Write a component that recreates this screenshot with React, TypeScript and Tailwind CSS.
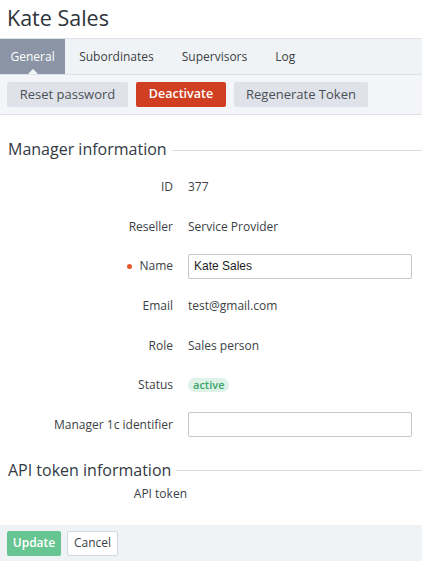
import React from 'react';

const rows: { label: string; value?: string; kind?: 'input' | 'badge'; required?: boolean }[] = [
  { label: 'ID', value: '377' },
  { label: 'Reseller', value: 'Service Provider' },
  { label: 'Name', value: 'Kate Sales', kind: 'input', required: true },
  { label: 'Email', value: 'test@gmail.com' },
  { label: 'Role', value: 'Sales person' },
  { label: 'Status', value: 'active', kind: 'badge' },
  { label: 'Manager 1c identifier', value: '', kind: 'input' },
];

function SectionTitle({ title }: { title: string }) {
  return (
    <div className="flex items-center gap-[5px] pl-2">
      <h2 className="text-[16px] leading-[24px] text-[#333a44] whitespace-nowrap">{title}</h2>
      <div className="flex-1 h-px bg-[#d9dde3] mt-[2px]" />
    </div>
  );
}

export default function App() {
  return (
    <div
      className="w-[422px] h-[564px] bg-white text-[#3b3f45] flex flex-col overflow-hidden"
      style={{ fontFamily: '"Open Sans", "Noto Sans", sans-serif' }}
    >
      <h1 className="text-[21.5px] leading-[28px] px-[7px] pt-[4px] pb-[6px] text-[#2f343b]">Kate Sales</h1>

      {/* tabs */}
      <div className="flex h-[36px] bg-[#f0f3f6] border-t border-[#dde2e8] text-[12px]">
        <div className="relative flex items-center px-[10.5px] bg-[#8b95a5] text-white">
          General
          <span className="absolute bottom-0 left-1/2 -translate-x-1/2 w-0 h-0 border-l-[5px] border-r-[5px] border-b-[5px] border-l-transparent border-r-transparent border-b-[#f3f5f8]" />
        </div>
        <div className="flex items-center px-[14px] text-[#3b3f45]">Subordinates</div>
        <div className="flex items-center px-[14px] text-[#3b3f45]">Supervisors</div>
        <div className="flex items-center px-[14px] text-[#3b3f45]">Log</div>
      </div>

      {/* actions */}
      <div className="flex gap-2 px-[7px] py-[7px] bg-[#f3f5f8] border-t border-b border-[#dde2e8] text-[13px]">
        <button className="h-[25px] w-[121px] rounded-[2px] bg-[#dfe3e9] text-[#4a4f56]">Reset password</button>
        <button className="h-[25px] w-[90px] rounded-[2px] bg-[#d03f22] text-white font-semibold text-[12.5px]">Deactivate</button>
        <button className="h-[25px] w-[134px] rounded-[2px] bg-[#dfe3e9] text-[#4a4f56]">Regenerate Token</button>
      </div>

      <div className="pt-[22px]">
        <SectionTitle title="Manager information" />
        <div className="flex flex-col pt-[6px] text-[12px]">
          {rows.map((r) => (
            <div key={r.label} className="flex items-center h-[39.7px]">
              <div className="w-[173px] flex items-center justify-end gap-[7px] text-[#3b3f45]">
                {r.required && <span className="w-[5px] h-[5px] rounded-full bg-[#e8562a]" />}
                {r.label}
              </div>
              <div className="pl-[15px] flex-1 pr-[10px]">
                {r.kind === 'input' ? (
                  <input
                    readOnly
                    value={r.value}
                    className="w-full h-[25px] border border-[#c3c8cf] rounded-[2px] px-[5px] text-[12px] text-[#222] outline-none"
                    style={{ fontFamily: '"Liberation Sans", Arial, sans-serif' }}
                  />
                ) : r.kind === 'badge' ? (
                  <span className="inline-block mt-[2px] px-[5px] rounded-full bg-[#dff2e8] text-[#3ba56c] font-semibold text-[11px] leading-[14px]">
                    {r.value}
                  </span>
                ) : (
                  <span className="text-[#3b3f45]">{r.value}</span>
                )}
              </div>
            </div>
          ))}
        </div>
      </div>

      <div className="pt-[13px]">
        <SectionTitle title="API token information" />
        <div className="flex items-center h-[24px] text-[12px]">
          <div className="w-[187px] text-right">API token</div>
        </div>
      </div>

      <div className="mt-auto mb-[3px] h-[36px] bg-[#f0f3f6] flex items-center gap-[6px] px-[7px] text-[12px]">
        <button className="h-[25px] w-[54px] rounded-[2px] bg-[#66c591] text-white font-semibold">Update</button>
        <button className="h-[25px] w-[51px] rounded-[2px] bg-white border border-[#d3d7dd] text-[#3b3f45]">Cancel</button>
      </div>
    </div>
  );
}
